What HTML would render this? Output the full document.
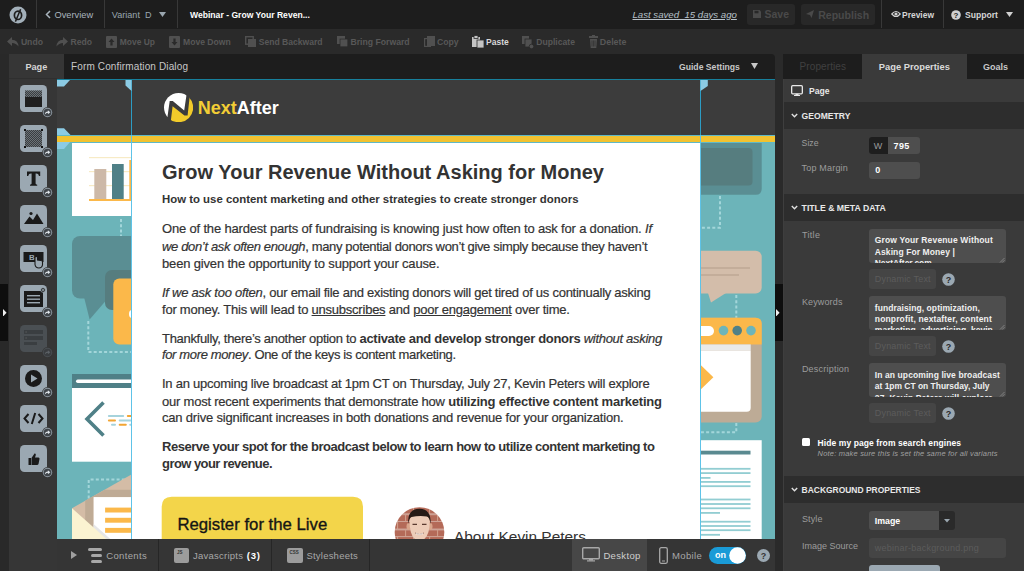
<!DOCTYPE html><html><head><meta charset="utf-8"><style>html,body{margin:0;padding:0;width:1024px;height:571px;overflow:hidden;background:#2a2a2a;font-family:"Liberation Sans", sans-serif;}*{box-sizing:border-box;}b{-webkit-text-stroke-width:0;}</style></head><body>
<div style="position:absolute;left:0px;top:0px;width:1024px;height:29px;background:#1d1d1d;border-radius:0px;"></div>
<div style="position:absolute;left:36px;top:0px;width:1px;height:28px;background:#383838;border-radius:0px;"></div>
<div style="position:absolute;left:104px;top:0px;width:1px;height:28px;background:#383838;border-radius:0px;"></div>
<div style="position:absolute;left:177px;top:0px;width:1px;height:28px;background:#383838;border-radius:0px;"></div>
<div style="position:absolute;left:881px;top:0px;width:1px;height:28px;background:#383838;border-radius:0px;"></div>
<div style="position:absolute;left:943px;top:0px;width:1px;height:28px;background:#383838;border-radius:0px;"></div>
<div style="position:absolute;left:0px;top:29px;width:1024px;height:25px;background:#2a2a2a;border-radius:0px;"></div>
<div style="position:absolute;left:0px;top:54px;width:9px;height:517px;background:#292929;border-radius:0px;"></div>
<div style="position:absolute;left:9px;top:54px;width:55px;height:25px;background:#363636;border-radius:0px;"></div>
<div style="position:absolute;left:9px;top:79px;width:48px;height:492px;background:#363636;border-radius:0px;"></div>
<div style="position:absolute;left:9px;top:78px;width:48px;height:1px;background:#2f2f2f;border-radius:0px;"></div>
<div style="position:absolute;left:64px;top:54px;width:711px;height:25px;background:#1d1d1d;border-radius:0 4px 0 0;"></div>
<div style="position:absolute;left:775px;top:54px;width:9px;height:517px;background:#2a2a2a;border-radius:0px;"></div>
<div style="position:absolute;left:783px;top:54px;width:79px;height:25px;background:#1d1d1d;border-radius:0px;"></div>
<div style="position:absolute;left:862px;top:54px;width:105px;height:25px;background:#3a3a3a;border-radius:0px;"></div>
<div style="position:absolute;left:967px;top:54px;width:57px;height:25px;background:#1d1d1d;border-radius:0px;"></div>
<div style="position:absolute;left:783px;top:79px;width:241px;height:492px;background:#3a3a3a;border-radius:0px;"></div>
<div style="position:absolute;left:784px;top:102px;width:240px;height:27px;background:#2d2d2d;border-radius:0px;"></div>
<div style="position:absolute;left:784px;top:194px;width:240px;height:27px;background:#2d2d2d;border-radius:0px;"></div>
<div style="position:absolute;left:784px;top:476px;width:240px;height:27px;background:#2d2d2d;border-radius:0px;"></div>
<div style="position:absolute;left:57px;top:80px;width:718px;height:459px;overflow:hidden;background:#6cb4b9;">
<div style="position:absolute;left:-57px;top:-80px;width:1024px;height:571px;">
<svg style="position:absolute;left:0;top:0" width="1024" height="571" viewBox="0 0 1024 571"><rect x="57" y="80" width="718" height="55" fill="#3c3c3c"/><rect x="72" y="143" width="70" height="73" fill="#ffffff"/><rect x="89" y="157" width="45" height="1.2" fill="#f7ebc6"/><rect x="89" y="171" width="45" height="1.2" fill="#f7ebc6"/><rect x="89" y="185" width="45" height="1.2" fill="#f7ebc6"/><rect x="89" y="199" width="45" height="2" fill="#fbb84a"/><rect x="129.3" y="160" width="3" height="40" fill="#fbb84a"/><rect x="94.3" y="169" width="12" height="30" fill="#cdb9a8"/><rect x="112" y="164" width="11.7" height="35" fill="#4f8087"/><path d="M121 219 V236" stroke="#a3d6da" stroke-width="2" stroke-dasharray="3 2.2"/><rect x="72" y="236" width="80" height="62.5" rx="8" fill="#5a8e93"/><path d="M84 297 L89.6 319.5 L109 297Z" fill="#5a8e93"/><rect x="105" y="270" width="40" height="40" rx="7" fill="#567d7f"/><rect x="113.3" y="278.5" width="40" height="66" rx="6" fill="#fbb84a"/><ellipse cx="132" cy="314" rx="3" ry="4" fill="#ffffff"/><path d="M88.3 321 V352 H134" fill="none" stroke="#a3d6da" stroke-width="2" stroke-dasharray="3 2.2"/><rect x="72" y="374" width="70" height="14" fill="#4f8087"/><rect x="76" y="379.5" width="60" height="3.5" rx="1.7" fill="#ffffff"/><rect x="72" y="388" width="70" height="73.7" fill="#ffffff"/><path d="M103.5 402.5 L87 419 L103.5 435.5" fill="none" stroke="#4f8087" stroke-width="3.6"/><rect x="107.9" y="415.1" width="16.299999999999997" height="2" rx="1" fill="#a6d3dc"/><rect x="126.8" y="415.1" width="9.200000000000003" height="2" rx="1" fill="#f2a533"/><rect x="107.9" y="419.5" width="8.099999999999994" height="2" rx="1" fill="#f2a533"/><rect x="118.7" y="419.5" width="17.299999999999997" height="2" rx="1" fill="#a6d3dc"/><rect x="111" y="423.7" width="5" height="2" rx="1" fill="#a6d3dc"/><rect x="118.7" y="423.7" width="8.099999999999994" height="2" rx="1" fill="#f2a533"/><rect x="129.2" y="423.7" width="6.800000000000011" height="2" rx="1" fill="#a6d3dc"/><path d="M88.7 498.5 V479.6 H134" fill="none" stroke="#a3d6da" stroke-width="2" stroke-dasharray="3 2.2"/><path d="M72 508.3 L134 473 V545 H72Z" fill="#d4bca6"/><path d="M85.2 500.8 L104.7 489.7 H134 V497.1 H93.6 V530 H85.2Z" fill="#bfab95"/><rect x="93.6" y="497.1" width="40" height="45" fill="#ffffff"/><rect x="105.1" y="507.6" width="30" height="4.9" fill="#fbb84a"/><rect x="105.1" y="517.8" width="30" height="4.9" fill="#fbb84a"/><rect x="105.1" y="527.9" width="30" height="4.9" fill="#fbb84a"/><path d="M93.6 524 L117 545 H110 L93.6 531Z" fill="#e6e6e6"/><path d="M72 508.3 L110 542 H72Z" fill="#fbf3d1"/><path d="M690 135 H761.7 V188.7 Q761.7 194.7 755.7 194.7 H690Z" fill="#5a8e93"/><rect x="690" y="148" width="62.5" height="37.5" rx="4" fill="#567d7f"/><path d="M720 196 V227.7 H700" fill="none" stroke="#a3d6da" stroke-width="2" stroke-dasharray="3 2.2"/><rect x="690" y="250.7" width="71.7" height="42.9" rx="6" fill="#d3bdaa"/><path d="M708 293 L711 302.5 L726 293Z" fill="#d3bdaa"/><rect x="700" y="267" width="50" height="2" fill="#c3ad9a"/><rect x="700" y="274" width="39" height="2" fill="#c3ad9a"/><path d="M736.3 295 V318" fill="none" stroke="#a3d6da" stroke-width="2" stroke-dasharray="3 2.2"/><path d="M736.3 423 V432.2 H700" fill="none" stroke="#a3d6da" stroke-width="2" stroke-dasharray="3 2.2"/><rect x="690" y="317.8" width="71.7" height="104.6" rx="6" fill="#bdab96"/><path d="M690 317.8 H755.7 Q761.7 317.8 761.7 323.8 V344.4 H690Z" fill="#fbb84a"/><rect x="690" y="326" width="24" height="10" rx="5" fill="#ffffff"/><circle cx="723.5" cy="330.6" r="4.8" fill="#6db5ba"/><circle cx="737.2" cy="330.6" r="4.8" fill="#4f8087"/><circle cx="751" cy="330.6" r="4.8" fill="#6db5ba"/><rect x="690" y="344.4" width="60.7" height="6.1" fill="#e9eaea"/><path d="M690 350.5 H750.7 V407.7 Q750.7 411.7 746.7 411.7 H690Z" fill="#ffffff"/><path d="M696 360.5 L713.4 377.2 L696 393.9Z" fill="#fbb84a"/><rect x="690" y="440.2" width="71.7" height="110" fill="#ffffff"/><rect x="700" y="450.7" width="50.5" height="3.8" fill="#5a8a90"/><rect x="700" y="467.90000000000003" width="50.5" height="1.8" fill="#92cdd2"/><rect x="700" y="472.20000000000005" width="50.5" height="1.8" fill="#92cdd2"/><rect x="700" y="477.0" width="10.5" height="1.8" fill="#92cdd2"/><rect x="700" y="481.0" width="50.5" height="1.8" fill="#92cdd2"/><rect x="700" y="485.3" width="50.5" height="1.8" fill="#92cdd2"/><rect x="700" y="498.6" width="50.5" height="1.8" fill="#92cdd2"/><rect x="700" y="503.1" width="50.5" height="1.8" fill="#92cdd2"/><rect x="700" y="507.40000000000003" width="50.5" height="1.8" fill="#92cdd2"/><rect x="700" y="512.0" width="20" height="1.8" fill="#92cdd2"/><rect x="700" y="520.8000000000001" width="50.5" height="1.8" fill="#92cdd2"/><rect x="700" y="525.1" width="50.5" height="1.8" fill="#92cdd2"/><rect x="700" y="529.3000000000001" width="50.5" height="1.8" fill="#92cdd2"/><rect x="700" y="533.9" width="20" height="1.8" fill="#92cdd2"/><rect x="131" y="142" width="569" height="420" fill="#ffffff"/><rect x="57" y="135" width="718" height="8" fill="#5fb9c7"/><rect x="57" y="136" width="718" height="6" fill="#f2c230"/><rect x="131" y="80" width="1" height="470" fill="#5ec3e8"/><rect x="700" y="80" width="1" height="470" fill="#5ec3e8"/><rect x="131" y="80" width="1" height="55" fill="#2c9cc4"/><rect x="700" y="80" width="1" height="55" fill="#2c9cc4"/><path d="M125.5 80 H131.5 V91 L125.5 85.5Z" fill="#8ccbe4"/><path d="M700.5 80 H707.8 V86 L700.5 91Z" fill="#8ccbe4"/><path d="M57 80 H70 L64 86.5 H57Z" fill="#8ccbe4"/><path d="M57 128.2 H64 L70.5 135 H57Z" fill="#8ccbe4"/><path d="M57 142 H70 L64 149 H57Z" fill="#8ccbe4"/><path d="M161.7 560 V506.7 Q161.7 496.7 171.7 496.7 H353 Q363 496.7 363 506.7 V560Z" fill="#f3d54a"/><defs><clipPath id="av"><circle cx="419.5" cy="532" r="24.8"/></clipPath><pattern id="brick" width="16" height="15.2" patternUnits="userSpaceOnUse" x="394" y="506.7"><rect width="16" height="15.2" fill="#b46a58"/><rect y="7" width="16" height="1.1" fill="#e2cdc3"/><rect y="14.6" width="16" height="1.1" fill="#e2cdc3"/><rect x="3" y="0" width="1.1" height="7" fill="#cf9c88"/><rect x="11" y="7.6" width="1.1" height="7" fill="#cf9c88"/></pattern></defs><g clip-path="url(#av)"><rect x="394" y="506" width="52" height="52" fill="url(#brick)"/><ellipse cx="408.5" cy="526.5" rx="2" ry="3.5" fill="#d9a58b"/><ellipse cx="430.5" cy="526.5" rx="2" ry="3.5" fill="#d9a58b"/><path d="M409.5 520 Q409.5 540 419.5 541 Q429.8 540 429.8 520 Q429 515 419.5 515 Q410 515 409.5 520Z" fill="#edccb8"/><path d="M408.3 524 Q407 509 419.5 508.7 Q431.5 509 430.6 524 Q429.5 517 427 516.5 Q419 515.5 411.5 517 Q409 518 408.3 524Z" fill="#261a16"/><path d="M412.5 524.3 H417 M422 524.3 H426.5" stroke="#5a3a30" stroke-width="1.2"/><path d="M415 533 Q419.5 536 424 533" fill="none" stroke="#8a5a4a" stroke-width="0.9"/><path d="M415.8 533.6 Q419.5 535.2 423.2 533.6" fill="none" stroke="#fff" stroke-width="0.9"/></g></svg>
<svg style="position:absolute;left:164px;top:92.5px;" width="29.2" height="29.2" viewBox="0 0 29.2 29.2"><defs><clipPath id="lg"><circle cx="14.6" cy="14.6" r="14.6"/></clipPath></defs><g clip-path="url(#lg)"><path d="M0 0 H22.6 L22.4 2.8 L20.2 17.4 L8.8 8 H5.7 L3.5 23.8 L0 29Z" fill="#ffffff"/><path d="M6.6 29.5 L8.6 13.3 L20.4 22.6 H23.6 L25.6 4.5 L29.5 0 V29.5Z" fill="#f2cb2a"/></g></svg>
<div id="c_next" style="position:absolute;left:197.7px;top:95.50px;height:24px;line-height:24px;font-size:17.993px;font-weight:700;color:#ffffff;white-space:nowrap;"><span style="color:#f2cd35">Next</span>After</div>
<div id="c_title" style="position:absolute;left:162px;top:159.50px;height:24px;line-height:24px;font-size:20px;font-weight:700;color:#333333;white-space:nowrap;letter-spacing:0.007px;">Grow Your Revenue Without Asking for Money</div>
<div id="c_sub" style="position:absolute;left:162px;top:188.60px;height:20px;line-height:20px;font-size:11.405px;font-weight:700;color:#333333;white-space:nowrap;">How to use content marketing and other strategies to create stronger donors</div>
<div id="c_l0" style="position:absolute;left:162px;top:220.40px;height:17px;line-height:17px;font-size:13px;font-weight:400;color:#333333;white-space:nowrap;letter-spacing:-0.176px;-webkit-text-stroke:0.2px #333;">One of the hardest parts of fundraising is knowing just how often to ask for a donation. <i>If</i></div>
<div id="c_l1" style="position:absolute;left:162px;top:237.70px;height:17px;line-height:17px;font-size:13px;font-weight:400;color:#333333;white-space:nowrap;letter-spacing:-0.345px;-webkit-text-stroke:0.2px #333;"><i>we don’t ask often enough</i>, many potential donors won’t give simply because they haven’t</div>
<div id="c_l2" style="position:absolute;left:162px;top:255.00px;height:17px;line-height:17px;font-size:13px;font-weight:400;color:#333333;white-space:nowrap;letter-spacing:-0.166px;-webkit-text-stroke:0.2px #333;">been given the opportunity to support your cause.</div>
<div id="c_l3" style="position:absolute;left:162px;top:284.20px;height:17px;line-height:17px;font-size:13px;font-weight:400;color:#333333;white-space:nowrap;letter-spacing:-0.260px;-webkit-text-stroke:0.2px #333;"><i>If we ask too often</i>, our email file and existing donors will get tired of us continually asking</div>
<div id="c_l4" style="position:absolute;left:162px;top:301.20px;height:17px;line-height:17px;font-size:13px;font-weight:400;color:#333333;white-space:nowrap;letter-spacing:-0.232px;-webkit-text-stroke:0.2px #333;">for money. This will lead to <u>unsubscribes</u> and <u>poor engagement</u> over time.</div>
<div id="c_l5" style="position:absolute;left:162px;top:329.70px;height:17px;line-height:17px;font-size:13px;font-weight:400;color:#333333;white-space:nowrap;letter-spacing:-0.305px;-webkit-text-stroke:0.2px #333;">Thankfully, there’s another option to <b>activate and develop stronger donors</b> <i>without asking</i></div>
<div id="c_l6" style="position:absolute;left:162px;top:346.40px;height:17px;line-height:17px;font-size:13px;font-weight:400;color:#333333;white-space:nowrap;letter-spacing:-0.363px;-webkit-text-stroke:0.2px #333;"><i>for more money</i>. One of the keys is content marketing.</div>
<div id="c_l7" style="position:absolute;left:162px;top:375.40px;height:17px;line-height:17px;font-size:13px;font-weight:400;color:#333333;white-space:nowrap;letter-spacing:-0.245px;-webkit-text-stroke:0.2px #333;">In an upcoming live broadcast at 1pm CT on Thursday, July 27, Kevin Peters will explore</div>
<div id="c_l8" style="position:absolute;left:162px;top:392.50px;height:17px;line-height:17px;font-size:13px;font-weight:400;color:#333333;white-space:nowrap;letter-spacing:-0.221px;-webkit-text-stroke:0.2px #333;">our most recent experiments that demonstrate how <b>utilizing effective content marketing</b></div>
<div id="c_l9" style="position:absolute;left:162px;top:409.20px;height:17px;line-height:17px;font-size:13px;font-weight:400;color:#333333;white-space:nowrap;letter-spacing:-0.194px;-webkit-text-stroke:0.2px #333;">can drive significant increases in both donations and revenue for your organization.</div>
<div id="c_l10" style="position:absolute;left:162px;top:438.20px;height:17px;line-height:17px;font-size:13px;font-weight:400;color:#333333;white-space:nowrap;letter-spacing:-0.465px;-webkit-text-stroke:0.2px #333;"><b>Reserve your spot for the broadcast below to learn how to utilize content marketing to</b></div>
<div id="c_l11" style="position:absolute;left:162px;top:455.20px;height:17px;line-height:17px;font-size:13px;font-weight:400;color:#333333;white-space:nowrap;letter-spacing:-0.554px;-webkit-text-stroke:0.2px #333;"><b>grow your revenue.</b></div>
<div id="c_reg" style="position:absolute;left:177.4px;top:514.00px;height:22px;line-height:22px;font-size:16.761px;font-weight:400;color:#151515;white-space:nowrap;-webkit-text-stroke:0.35px #151515;">Register for the Live</div>
<div id="c_about" style="position:absolute;left:454px;top:526.00px;height:22px;line-height:22px;font-size:15.419px;font-weight:400;color:#333333;white-space:nowrap;">About Kevin Peters</div>
</div></div>
<div style="position:absolute;left:57px;top:79px;width:718px;height:1px;background:#17809c;border-radius:0px;"></div>
<div style="position:absolute;left:57px;top:539px;width:718px;height:32px;background:#353535;border-radius:0px;"></div>
<div style="position:absolute;left:158px;top:539px;width:1px;height:32px;background:#262626;border-radius:0px;"></div>
<div style="position:absolute;left:271px;top:539px;width:1px;height:32px;background:#262626;border-radius:0px;"></div>
<div style="position:absolute;left:369px;top:539px;width:1px;height:32px;background:#262626;border-radius:0px;"></div>
<div style="position:absolute;left:572px;top:539px;width:75px;height:32px;background:#474747;border-radius:0px;"></div>
<div style="position:absolute;left:0px;top:284px;width:8px;height:57px;background:#0e0e0e;border-radius:0px;"></div>
<svg style="position:absolute;left:2.5px;top:308.5px;" width="4" height="7.5" viewBox="0 0 4 7.5"><path d="M0 0 L3.6 3.75 L0 7.5Z" fill="#f0f0f0"/></svg>
<div style="position:absolute;left:775px;top:284px;width:8px;height:57px;background:#0e0e0e;border-radius:0px;"></div>
<svg style="position:absolute;left:776px;top:308.5px;" width="4" height="7.5" viewBox="0 0 4 7.5"><path d="M0 0 L3.6 3.75 L0 7.5Z" fill="#f0f0f0"/></svg>
<div style="position:absolute;left:783px;top:79px;width:1px;height:492px;background:#3e3e3e;border-radius:0px;"></div>
<svg style="position:absolute;left:9px;top:6px;" width="18" height="18" viewBox="0 0 18 18"><circle cx="9" cy="9" r="8.5" fill="#a3b0ba"/><ellipse cx="9" cy="9.3" rx="3.6" ry="4.2" fill="none" stroke="#1d1d1d" stroke-width="1.7"/><path d="M11.6 3.2 L6.4 15.6" stroke="#1d1d1d" stroke-width="1.5"/></svg>
<svg style="position:absolute;left:45px;top:10px;" width="6" height="9" viewBox="0 0 6 9"><path d="M5 1 L1.5 4.5 L5 8" fill="none" stroke="#a9b5be" stroke-width="1.5"/></svg>
<svg style="position:absolute;left:159px;top:12px;" width="7" height="5" viewBox="0 0 7 5"><path d="M0 0 L7 0 L3.5 5Z" fill="#9aa6af"/></svg>
<div style="position:absolute;left:747px;top:4px;width:48px;height:21px;background:#282828;border-radius:3px;"></div>
<div style="position:absolute;left:801px;top:4px;width:74px;height:21px;background:#282828;border-radius:3px;"></div>
<svg style="position:absolute;left:753px;top:10px;" width="8" height="8" viewBox="0 0 8 8"><path d="M0 0 H6.5 L8 1.5 V8 H0Z" fill="#4a4a4a"/><rect x="1.5" y="0.8" width="4" height="2.5" fill="#282828"/></svg>
<svg style="position:absolute;left:806px;top:10px;" width="8" height="8" viewBox="0 0 8 8"><path d="M0 4 L8 0 L5.5 8 L4 5Z" fill="#4a4a4a"/></svg>
<svg style="position:absolute;left:891px;top:10px;" width="10" height="8" viewBox="0 0 10 8"><path d="M0.8 4 Q5 -1 9.2 4 Q5 9 0.8 4Z" fill="none" stroke="#d0d0d0" stroke-width="1.2"/><circle cx="5" cy="4" r="1.6" fill="#d0d0d0"/></svg>
<svg style="position:absolute;left:951px;top:10px;" width="10" height="10" viewBox="0 0 10 10"><circle cx="5" cy="5" r="4.8" fill="#d0d0d0"/><text x="5" y="8.2" font-size="8" font-weight="700" text-anchor="middle" fill="#1d1d1d" font-family="Liberation Sans">?</text></svg>
<svg style="position:absolute;left:1006px;top:12px;" width="7" height="5" viewBox="0 0 7 5"><path d="M0 0 L7 0 L3.5 5Z" fill="#d0d0d0"/></svg>
<svg style="position:absolute;left:7px;top:37px;" width="12" height="10" viewBox="0 0 12 10"><path d="M0 4.5 L5 0 V2.8 Q11 2.8 11.5 9.5 Q9 6 5 6 V9Z" fill="#505050"/></svg>
<svg style="position:absolute;left:56px;top:37px;" width="12" height="10" viewBox="0 0 12 10"><path d="M12 4.5 L7 0 V2.8 Q1 2.8 0.5 9.5 Q3 6 7 6 V9Z" fill="#505050"/></svg>
<svg style="position:absolute;left:106px;top:36px;" width="11" height="12" viewBox="0 0 11 12"><rect width="11" height="12" rx="1" fill="#505050"/><path d="M5.5 2.5 L8.5 6 H6.6 V9.5 H4.4 V6 H2.5Z" fill="#2a2a2a"/></svg>
<svg style="position:absolute;left:169px;top:36px;" width="11" height="12" viewBox="0 0 11 12"><rect width="11" height="12" rx="1" fill="#505050"/><path d="M5.5 9.5 L8.5 6 H6.6 V2.5 H4.4 V6 H2.5Z" fill="#2a2a2a"/></svg>
<svg style="position:absolute;left:245px;top:36px;" width="11" height="12" viewBox="0 0 11 12"><rect x="0.7" y="0.7" width="7.5" height="7.5" fill="none" stroke="#505050" stroke-width="1.4"/><rect x="3" y="3" width="8" height="8" fill="#505050"/></svg>
<svg style="position:absolute;left:337px;top:36px;" width="11" height="12" viewBox="0 0 11 12"><rect x="0" y="0" width="8" height="8" fill="#505050"/><rect x="2.7" y="2.7" width="8" height="8" fill="#2a2a2a"/><rect x="3.4" y="3.4" width="7" height="7" fill="#505050"/></svg>
<svg style="position:absolute;left:424px;top:36px;" width="11" height="12" viewBox="0 0 11 12"><rect x="0" y="2" width="7" height="9" fill="#505050"/><rect x="1.2" y="3.2" width="4.6" height="6.6" fill="#2a2a2a"/><rect x="3" y="0" width="8" height="10" fill="#505050"/></svg>
<svg style="position:absolute;left:472px;top:35px;" width="12" height="13" viewBox="0 0 12 13"><rect x="0" y="2" width="8" height="10" fill="#c4c4c4"/><rect x="2" y="0.5" width="4" height="3" fill="#c4c4c4" stroke="#2a2a2a" stroke-width="0.8"/><rect x="5" y="5" width="7" height="8" fill="#c4c4c4" stroke="#2a2a2a" stroke-width="0.8"/></svg>
<svg style="position:absolute;left:522px;top:36px;" width="12" height="13" viewBox="0 0 12 13"><rect x="0" y="0" width="7" height="8" fill="#505050"/><rect x="3" y="3" width="7" height="8" fill="#505050" stroke="#2a2a2a" stroke-width="0.8"/><circle cx="9.5" cy="10.5" r="2.3" fill="#505050" stroke="#2a2a2a" stroke-width="0.8"/></svg>
<svg style="position:absolute;left:589px;top:35px;" width="9" height="13" viewBox="0 0 9 13"><rect x="0" y="1" width="9" height="2" fill="#505050"/><rect x="3" y="0" width="3" height="1.5" fill="#505050"/><path d="M1 4 H8 L7.3 13 H1.7Z" fill="#505050"/><path d="M3 5.5 V11.5 M4.5 5.5 V11.5 M6 5.5 V11.5" stroke="#2a2a2a" stroke-width="0.6"/></svg>
<svg style="position:absolute;left:751px;top:63px;" width="7" height="6" viewBox="0 0 7 6"><path d="M0 0 L7 0 L3.5 6Z" fill="#c8c8c8"/></svg>
<svg style="position:absolute;left:20px;top:85px;" width="27" height="27" viewBox="0 0 27 27"><rect width="27" height="27" rx="4.5" fill="#9ba8b2"/><defs><pattern id="chk" width="2" height="2" patternUnits="userSpaceOnUse"><rect width="1" height="1" fill="#3a3d40"/><rect x="1" y="1" width="1" height="1" fill="#3a3d40"/></pattern></defs><rect x="5" y="5.5" width="17" height="6.5" fill="#6b7378"/><rect x="5" y="5.5" width="17" height="6.5" fill="url(#chk)"/><rect x="5" y="12" width="17" height="10" fill="#1f1f1f"/></svg><svg style="position:absolute;left:42px;top:107px;" width="11" height="11" viewBox="0 0 11 11"><circle cx="5.5" cy="5.5" r="5.4" fill="#363636"/><circle cx="5.5" cy="5.5" r="4.7" fill="#8f9aa3"/><circle cx="5.5" cy="5.5" r="3.8" fill="#40454a"/><path d="M2.8 7.6 Q3 4.6 5.9 4.6 V3.2 L8.3 5.2 L5.9 7.2 V5.8 Q4 5.8 2.8 7.6Z" fill="#dfe5ea"/></svg>
<svg style="position:absolute;left:20px;top:125px;" width="27" height="27" viewBox="0 0 27 27"><rect width="27" height="27" rx="4.5" fill="#9ba8b2"/><rect x="5" y="5" width="17" height="17" fill="#6b7378"/><rect x="5" y="5" width="17" height="17" fill="url(#chk)"/><rect x="4" y="4" width="2" height="2" fill="#111"/><rect x="21" y="4" width="2" height="2" fill="#111"/><rect x="4" y="21" width="2" height="2" fill="#111"/><rect x="21" y="21" width="2" height="2" fill="#111"/></svg><svg style="position:absolute;left:42px;top:147px;" width="11" height="11" viewBox="0 0 11 11"><circle cx="5.5" cy="5.5" r="5.4" fill="#363636"/><circle cx="5.5" cy="5.5" r="4.7" fill="#8f9aa3"/><circle cx="5.5" cy="5.5" r="3.8" fill="#40454a"/><path d="M2.8 7.6 Q3 4.6 5.9 4.6 V3.2 L8.3 5.2 L5.9 7.2 V5.8 Q4 5.8 2.8 7.6Z" fill="#dfe5ea"/></svg>
<svg style="position:absolute;left:20px;top:165px;" width="27" height="27" viewBox="0 0 27 27"><rect width="27" height="27" rx="4.5" fill="#9ba8b2"/><path d="M7 6.5 H20.2 V11 H19 Q18.6 8.6 16.2 8.6 H15.6 V18.6 Q15.6 19.6 17.2 19.8 V20.8 H10 V19.8 Q11.6 19.6 11.6 18.6 V8.6 H11 Q8.6 8.6 8.2 11 H7Z" fill="#1a1a1a"/></svg><svg style="position:absolute;left:42px;top:187px;" width="11" height="11" viewBox="0 0 11 11"><circle cx="5.5" cy="5.5" r="5.4" fill="#363636"/><circle cx="5.5" cy="5.5" r="4.7" fill="#8f9aa3"/><circle cx="5.5" cy="5.5" r="3.8" fill="#40454a"/><path d="M2.8 7.6 Q3 4.6 5.9 4.6 V3.2 L8.3 5.2 L5.9 7.2 V5.8 Q4 5.8 2.8 7.6Z" fill="#dfe5ea"/></svg>
<svg style="position:absolute;left:20px;top:205px;" width="27" height="27" viewBox="0 0 27 27"><rect width="27" height="27" rx="4.5" fill="#9ba8b2"/><circle cx="11" cy="8.5" r="1.6" fill="#1a1a1a"/><path d="M4 19 L9.5 11.5 L13 15 L17 8.5 L23.5 19Z" fill="#1a1a1a"/></svg><svg style="position:absolute;left:42px;top:227px;" width="11" height="11" viewBox="0 0 11 11"><circle cx="5.5" cy="5.5" r="5.4" fill="#363636"/><circle cx="5.5" cy="5.5" r="4.7" fill="#8f9aa3"/><circle cx="5.5" cy="5.5" r="3.8" fill="#40454a"/><path d="M2.8 7.6 Q3 4.6 5.9 4.6 V3.2 L8.3 5.2 L5.9 7.2 V5.8 Q4 5.8 2.8 7.6Z" fill="#dfe5ea"/></svg>
<svg style="position:absolute;left:20px;top:245px;" width="27" height="27" viewBox="0 0 27 27"><rect width="27" height="27" rx="4.5" fill="#9ba8b2"/><rect x="3.5" y="7" width="20" height="10" fill="#1a1a1a"/><text x="12" y="15" font-size="8" font-weight="700" text-anchor="middle" fill="#9ba8b2" font-family="Liberation Sans">B</text><path d="M15 12 V19.5 Q15.5 23 19 23 Q22 23 22.5 20 V16.5 Q22 15.5 21 15.5 L17.5 15 V12 Q16.3 10.8 15 12Z" fill="#9ba8b2" stroke="#1a1a1a" stroke-width="1.1"/></svg><svg style="position:absolute;left:42px;top:267px;" width="11" height="11" viewBox="0 0 11 11"><circle cx="5.5" cy="5.5" r="5.4" fill="#363636"/><circle cx="5.5" cy="5.5" r="4.7" fill="#8f9aa3"/><circle cx="5.5" cy="5.5" r="3.8" fill="#40454a"/><path d="M2.8 7.6 Q3 4.6 5.9 4.6 V3.2 L8.3 5.2 L5.9 7.2 V5.8 Q4 5.8 2.8 7.6Z" fill="#dfe5ea"/></svg>
<svg style="position:absolute;left:20px;top:285px;" width="27" height="27" viewBox="0 0 27 27"><rect width="27" height="27" rx="4.5" fill="#9ba8b2"/><rect x="4" y="6" width="19" height="16" fill="#1a1a1a"/><rect x="7" y="10" width="13" height="1.4" fill="#9ba8b2"/><rect x="7" y="13.5" width="13" height="1.4" fill="#9ba8b2"/><rect x="7" y="17" width="13" height="1.4" fill="#9ba8b2"/><circle cx="23" cy="5" r="2.3" fill="#1a1a1a" stroke="#9ba8b2" stroke-width="0.8"/><circle cx="23" cy="5" r="1" fill="#9ba8b2"/></svg><svg style="position:absolute;left:42px;top:307px;" width="11" height="11" viewBox="0 0 11 11"><circle cx="5.5" cy="5.5" r="5.4" fill="#363636"/><circle cx="5.5" cy="5.5" r="4.7" fill="#8f9aa3"/><circle cx="5.5" cy="5.5" r="3.8" fill="#40454a"/><path d="M2.8 7.6 Q3 4.6 5.9 4.6 V3.2 L8.3 5.2 L5.9 7.2 V5.8 Q4 5.8 2.8 7.6Z" fill="#dfe5ea"/></svg>
<svg style="position:absolute;left:20px;top:325px;" width="27" height="27" viewBox="0 0 27 27"><rect width="27" height="27" rx="4.5" fill="#4a4f53"/><rect x="4" y="5" width="19" height="4" fill="#3a3e41"/><rect x="4" y="11" width="19" height="4" fill="#3a3e41"/><rect x="4" y="17" width="13" height="3" fill="#3a3e41"/><rect x="5.5" y="6.5" width="1.2" height="1" fill="#666"/><rect x="5.5" y="12.5" width="1.2" height="1" fill="#666"/></svg><svg style="position:absolute;left:42px;top:347px;" width="11" height="11" viewBox="0 0 11 11"><circle cx="5.5" cy="5.5" r="5.4" fill="#363636"/><circle cx="5.5" cy="5.5" r="4.7" fill="#4a4f53"/><circle cx="5.5" cy="5.5" r="3.8" fill="#3a3d40"/><path d="M2.8 7.6 Q3 4.6 5.9 4.6 V3.2 L8.3 5.2 L5.9 7.2 V5.8 Q4 5.8 2.8 7.6Z" fill="#5c6166"/></svg>
<svg style="position:absolute;left:20px;top:365px;" width="27" height="27" viewBox="0 0 27 27"><rect width="27" height="27" rx="4.5" fill="#9ba8b2"/><circle cx="13.5" cy="13.5" r="8.5" fill="#1a1a1a"/><path d="M11 9.5 L17.5 13.5 L11 17.5Z" fill="#9ba8b2"/></svg><svg style="position:absolute;left:42px;top:387px;" width="11" height="11" viewBox="0 0 11 11"><circle cx="5.5" cy="5.5" r="5.4" fill="#363636"/><circle cx="5.5" cy="5.5" r="4.7" fill="#8f9aa3"/><circle cx="5.5" cy="5.5" r="3.8" fill="#40454a"/><path d="M2.8 7.6 Q3 4.6 5.9 4.6 V3.2 L8.3 5.2 L5.9 7.2 V5.8 Q4 5.8 2.8 7.6Z" fill="#dfe5ea"/></svg>
<svg style="position:absolute;left:20px;top:405px;" width="27" height="27" viewBox="0 0 27 27"><rect width="27" height="27" rx="4.5" fill="#9ba8b2"/><path d="M8.5 9 L4.5 13.5 L8.5 18 M18.5 9 L22.5 13.5 L18.5 18 M15.2 8 L11.8 19" fill="none" stroke="#1a1a1a" stroke-width="2"/></svg><svg style="position:absolute;left:42px;top:427px;" width="11" height="11" viewBox="0 0 11 11"><circle cx="5.5" cy="5.5" r="5.4" fill="#363636"/><circle cx="5.5" cy="5.5" r="4.7" fill="#8f9aa3"/><circle cx="5.5" cy="5.5" r="3.8" fill="#40454a"/><path d="M2.8 7.6 Q3 4.6 5.9 4.6 V3.2 L8.3 5.2 L5.9 7.2 V5.8 Q4 5.8 2.8 7.6Z" fill="#dfe5ea"/></svg>
<svg style="position:absolute;left:20px;top:445px;" width="27" height="27" viewBox="0 0 27 27"><rect width="27" height="27" rx="4.5" fill="#9ba8b2"/><path d="M8.5 13 H11 V20 H8.5Z" fill="#1a1a1a"/><path d="M11.5 13 L14.5 8.5 Q16 8 15.8 10 L15 12.5 H18.5 Q19.8 12.8 19.5 14 L18.5 19 Q18.2 20 17 20 H11.5Z" fill="#1a1a1a"/></svg><svg style="position:absolute;left:42px;top:467px;" width="11" height="11" viewBox="0 0 11 11"><circle cx="5.5" cy="5.5" r="5.4" fill="#363636"/><circle cx="5.5" cy="5.5" r="4.7" fill="#8f9aa3"/><circle cx="5.5" cy="5.5" r="3.8" fill="#40454a"/><path d="M2.8 7.6 Q3 4.6 5.9 4.6 V3.2 L8.3 5.2 L5.9 7.2 V5.8 Q4 5.8 2.8 7.6Z" fill="#dfe5ea"/></svg>
<svg style="position:absolute;left:791px;top:84.5px;" width="12" height="11.2" viewBox="0 0 12 11.2"><rect x="0.65" y="0.65" width="10.7" height="8.2" rx="1" fill="none" stroke="#e8e8e8" stroke-width="1.3"/><rect x="4.5" y="8.8" width="3" height="1.4" fill="#e8e8e8"/><rect x="3" y="10" width="6" height="1.2" fill="#e8e8e8"/></svg>
<svg style="position:absolute;left:791px;top:113px;" width="7" height="5" viewBox="0 0 7 5"><path d="M0.8 1 L3.5 3.8 L6.2 1" fill="none" stroke="#e0e0e0" stroke-width="1.4"/></svg>
<svg style="position:absolute;left:791px;top:205px;" width="7" height="5" viewBox="0 0 7 5"><path d="M0.8 1 L3.5 3.8 L6.2 1" fill="none" stroke="#e0e0e0" stroke-width="1.4"/></svg>
<svg style="position:absolute;left:791px;top:487px;" width="7" height="5" viewBox="0 0 7 5"><path d="M0.8 1 L3.5 3.8 L6.2 1" fill="none" stroke="#e0e0e0" stroke-width="1.4"/></svg>
<div style="position:absolute;left:869px;top:137px;width:19px;height:17px;background:#1e1e1e;border-radius:3px 0 0 3px;"></div>
<div style="position:absolute;left:888px;top:137px;width:32px;height:17px;background:#4e4e4e;border-radius:0 3px 3px 0;"></div>
<div style="position:absolute;left:869px;top:162px;width:51px;height:17px;background:#4e4e4e;border-radius:3px;"></div>
<div style="position:absolute;left:869px;top:229px;width:137px;height:34px;background:#4e4e4e;border-radius:3px;overflow:hidden"></div>
<div style="position:absolute;left:869px;top:296px;width:137px;height:34px;background:#4e4e4e;border-radius:3px;overflow:hidden"></div>
<div style="position:absolute;left:869px;top:363px;width:137px;height:34px;background:#4e4e4e;border-radius:3px;overflow:hidden"></div>
<div style="position:absolute;left:869px;top:269px;width:67px;height:20px;background:#454545;border-radius:3px;"></div>
<svg style="position:absolute;left:942px;top:273px;" width="13" height="13" viewBox="0 0 13 13"><circle cx="6.5" cy="6.5" r="6.3" fill="#9ba8b2"/><text x="6.5" y="10" font-size="9" font-weight="700" text-anchor="middle" fill="#2a2a2a" font-family="Liberation Sans">?</text></svg>
<div style="position:absolute;left:869px;top:336px;width:67px;height:20px;background:#454545;border-radius:3px;"></div>
<svg style="position:absolute;left:942px;top:340px;" width="13" height="13" viewBox="0 0 13 13"><circle cx="6.5" cy="6.5" r="6.3" fill="#9ba8b2"/><text x="6.5" y="10" font-size="9" font-weight="700" text-anchor="middle" fill="#2a2a2a" font-family="Liberation Sans">?</text></svg>
<div style="position:absolute;left:869px;top:403px;width:67px;height:20px;background:#454545;border-radius:3px;"></div>
<svg style="position:absolute;left:942px;top:407px;" width="13" height="13" viewBox="0 0 13 13"><circle cx="6.5" cy="6.5" r="6.3" fill="#9ba8b2"/><text x="6.5" y="10" font-size="9" font-weight="700" text-anchor="middle" fill="#2a2a2a" font-family="Liberation Sans">?</text></svg>
<div style="position:absolute;left:802px;top:438px;width:8px;height:8px;background:#ffffff;border-radius:1.5px;"></div>
<div style="position:absolute;left:869px;top:511px;width:70px;height:19px;background:#4e4e4e;border-radius:3px 0 0 3px;"></div>
<div style="position:absolute;left:939px;top:511px;width:16px;height:19px;background:#2a2a2a;border-radius:0 3px 3px 0;"></div>
<svg style="position:absolute;left:944px;top:519px;" width="6" height="4" viewBox="0 0 6 4"><path d="M0 0 L6 0 L3 3.5Z" fill="#9aa6af"/></svg>
<div style="position:absolute;left:869px;top:538px;width:137px;height:20px;background:#454545;border-radius:3px;"></div>
<div style="position:absolute;left:869px;top:565px;width:71px;height:8px;background:#9ba8b2;border-radius:3px 3px 0 0;"></div>
<svg style="position:absolute;left:71px;top:551px;" width="6" height="8" viewBox="0 0 6 8"><path d="M0 0 L6 4 L0 8Z" fill="#a0a0a0"/></svg>
<svg style="position:absolute;left:87px;top:548px;" width="16" height="15" viewBox="0 0 16 15"><rect x="1" y="0" width="14" height="3" rx="1.5" fill="#a8a8a8"/><rect x="4" y="6" width="11" height="3" rx="1.5" fill="#a8a8a8"/><rect x="4" y="12" width="11" height="3" rx="1.5" fill="#a8a8a8"/></svg>
<svg style="position:absolute;left:174px;top:548px;" width="15" height="15" viewBox="0 0 15 15"><rect width="15" height="15" rx="2" fill="#9c9c9c"/><text x="3" y="6" font-size="4.5" font-weight="700" fill="#333" font-family="Liberation Sans">JS</text></svg>
<svg style="position:absolute;left:287px;top:548px;" width="16" height="15" viewBox="0 0 16 15"><rect width="16" height="15" rx="2" fill="#9c9c9c"/><text x="2.5" y="6" font-size="4.5" font-weight="700" fill="#333" font-family="Liberation Sans">CSS</text></svg>
<svg style="position:absolute;left:582px;top:547px;" width="18" height="15" viewBox="0 0 18 15"><rect x="0.7" y="0.7" width="16.6" height="11" rx="1" fill="none" stroke="#a8a8a8" stroke-width="1.4"/><rect x="7" y="11.5" width="4" height="2" fill="#a8a8a8"/><rect x="5" y="13.3" width="8" height="1.2" fill="#a8a8a8"/></svg>
<svg style="position:absolute;left:659px;top:547px;" width="9" height="17" viewBox="0 0 9 17"><rect x="0.7" y="0.7" width="7.6" height="15.6" rx="1.5" fill="none" stroke="#a8a8a8" stroke-width="1.3"/><rect x="3" y="13.5" width="3" height="1" fill="#a8a8a8"/></svg>
<div style="position:absolute;left:709px;top:547px;width:37px;height:17px;background:#1a9bd7;border-radius:8.5px;"></div>
<svg style="position:absolute;left:729px;top:547px;" width="17" height="17" viewBox="0 0 17 17"><circle cx="8.5" cy="8.5" r="8.3" fill="#ffffff"/></svg>
<svg style="position:absolute;left:757px;top:549px;" width="13" height="13" viewBox="0 0 13 13"><circle cx="6.5" cy="6.5" r="6.5" fill="#9ba8b2"/><text x="6.5" y="10" font-size="9" font-weight="700" text-anchor="middle" fill="#353535" font-family="Liberation Sans">?</text></svg>
<div id="t_overview" style="position:absolute;left:54.5px;top:4.50px;height:20px;line-height:20px;font-size:9.283px;font-weight:400;color:#a9b5be;white-space:nowrap;">Overview</div>
<div id="t_variant" style="position:absolute;left:111.8px;top:4.50px;height:20px;line-height:20px;font-size:9.1px;font-weight:400;color:#9aa6af;white-space:nowrap;">Variant&nbsp; D</div>
<div id="t_webinar" style="position:absolute;left:190px;top:4.50px;height:20px;line-height:20px;font-size:8.603px;font-weight:700;color:#ffffff;white-space:nowrap;">Webinar - Grow Your Reven...</div>
<div id="t_lastsaved" style="position:absolute;left:632.5px;top:4.50px;height:20px;line-height:20px;font-size:9.638px;font-weight:400;color:#b8c2ca;white-space:nowrap;font-style:italic;text-decoration:underline;">Last saved&nbsp; 15 days ago</div>
<div id="t_save" style="position:absolute;left:764.6px;top:4.50px;height:20px;line-height:20px;font-size:10.442px;font-weight:700;color:#4a4a4a;white-space:nowrap;">Save</div>
<div id="t_republish" style="position:absolute;left:818.2px;top:4.50px;height:20px;line-height:20px;font-size:10.551px;font-weight:700;color:#4a4a4a;white-space:nowrap;">Republish</div>
<div id="t_preview" style="position:absolute;left:902px;top:4.50px;height:20px;line-height:20px;font-size:8.463px;font-weight:700;color:#d5d5d5;white-space:nowrap;">Preview</div>
<div id="t_support" style="position:absolute;left:965px;top:4.50px;height:20px;line-height:20px;font-size:8.607px;font-weight:700;color:#d5d5d5;white-space:nowrap;">Support</div>
<div id="t_undo" style="position:absolute;left:20.9px;top:31.50px;height:20px;line-height:20px;font-size:8.647px;font-weight:700;color:#585858;white-space:nowrap;">Undo</div>
<div id="t_redo" style="position:absolute;left:70.5px;top:31.50px;height:20px;line-height:20px;font-size:8.6px;font-weight:700;color:#585858;white-space:nowrap;">Redo</div>
<div id="t_moveup" style="position:absolute;left:119.8px;top:31.50px;height:20px;line-height:20px;font-size:8.446px;font-weight:700;color:#585858;white-space:nowrap;">Move Up</div>
<div id="t_movedown" style="position:absolute;left:183px;top:31.50px;height:20px;line-height:20px;font-size:8.603px;font-weight:700;color:#585858;white-space:nowrap;">Move Down</div>
<div id="t_sendback" style="position:absolute;left:258.7px;top:31.50px;height:20px;line-height:20px;font-size:8.58px;font-weight:700;color:#585858;white-space:nowrap;">Send Backward</div>
<div id="t_bringfwd" style="position:absolute;left:350.5px;top:31.50px;height:20px;line-height:20px;font-size:8.663px;font-weight:700;color:#585858;white-space:nowrap;">Bring Forward</div>
<div id="t_copy" style="position:absolute;left:437px;top:31.50px;height:20px;line-height:20px;font-size:8.68px;font-weight:700;color:#585858;white-space:nowrap;">Copy</div>
<div id="t_paste" style="position:absolute;left:486px;top:31.50px;height:20px;line-height:20px;font-size:8.541px;font-weight:700;color:#d8d8d8;white-space:nowrap;">Paste</div>
<div id="t_duplicate" style="position:absolute;left:536.3px;top:31.50px;height:20px;line-height:20px;font-size:8.597px;font-weight:700;color:#585858;white-space:nowrap;">Duplicate</div>
<div id="t_delete" style="position:absolute;left:599.8px;top:31.50px;height:20px;line-height:20px;font-size:8.895px;font-weight:700;color:#585858;white-space:nowrap;">Delete</div>
<div id="t_pagetab" style="position:absolute;left:25.4px;top:56.80px;height:20px;line-height:20px;font-size:9.161px;font-weight:700;color:#d5d5d5;white-space:nowrap;">Page</div>
<div id="t_formconf" style="position:absolute;left:71px;top:56.80px;height:20px;line-height:20px;font-size:10px;font-weight:400;color:#c8c8c8;white-space:nowrap;letter-spacing:0.133px;">Form Confirmation Dialog</div>
<div id="t_guide" style="position:absolute;left:679px;top:56.80px;height:20px;line-height:20px;font-size:8.643px;font-weight:700;color:#c8c8c8;white-space:nowrap;">Guide Settings</div>
<div id="t_props" style="position:absolute;left:799.6px;top:56.80px;height:20px;line-height:20px;font-size:10px;font-weight:400;color:#404040;white-space:nowrap;letter-spacing:0.091px;">Properties</div>
<div id="t_pageprops" style="position:absolute;left:878.8px;top:56.80px;height:20px;line-height:20px;font-size:9.349px;font-weight:700;color:#dadada;white-space:nowrap;">Page Properties</div>
<div id="t_goals" style="position:absolute;left:983px;top:56.80px;height:20px;line-height:20px;font-size:8.994px;font-weight:700;color:#c8c8c8;white-space:nowrap;">Goals</div>
<div id="p_page" style="position:absolute;left:809px;top:80.70px;height:20px;line-height:20px;font-size:8.572px;font-weight:700;color:#e8e8e8;white-space:nowrap;">Page</div>
<div id="p_geom" style="position:absolute;left:801.6px;top:106.00px;height:20px;line-height:20px;font-size:8.618px;font-weight:700;color:#e8e8e8;white-space:nowrap;">GEOMETRY</div>
<div id="p_size" style="position:absolute;left:801.6px;top:133.30px;height:20px;line-height:20px;font-size:8.735px;font-weight:400;color:#9c9c9c;white-space:nowrap;">Size</div>
<div id="p_topm" style="position:absolute;left:801.6px;top:158.30px;height:20px;line-height:20px;font-size:9px;font-weight:400;color:#9c9c9c;white-space:nowrap;letter-spacing:0.185px;">Top Margin</div>
<div id="p_w" style="position:absolute;left:873.8px;top:135.50px;height:20px;line-height:20px;font-size:9px;font-weight:400;color:#9c9c9c;white-space:nowrap;letter-spacing:0.700px;">W</div>
<div id="p_795" style="position:absolute;left:893.4px;top:135.50px;height:20px;line-height:20px;font-size:9px;font-weight:700;color:#ffffff;white-space:nowrap;letter-spacing:0.484px;">795</div>
<div id="p_0" style="position:absolute;left:875.2px;top:160.00px;height:20px;line-height:20px;font-size:9px;font-weight:700;color:#ffffff;white-space:nowrap;">0</div>
<div id="p_title" style="position:absolute;left:801.6px;top:198.00px;height:20px;line-height:20px;font-size:8.705px;font-weight:700;color:#e8e8e8;white-space:nowrap;">TITLE &amp; META DATA</div>
<div id="p_titlel" style="position:absolute;left:801.9px;top:224.80px;height:20px;line-height:20px;font-size:9px;font-weight:400;color:#9c9c9c;white-space:nowrap;letter-spacing:0.332px;">Title</div>
<div id="p_ta1a" style="position:absolute;left:874.8px;top:230.30px;height:20px;line-height:20px;font-size:8.5px;font-weight:700;color:#f0f0f0;white-space:nowrap;letter-spacing:0.151px;">Grow Your Revenue Without</div>
<div id="p_ta1b" style="position:absolute;left:874.8px;top:241.70px;height:20px;line-height:20px;font-size:8.5px;font-weight:700;color:#f0f0f0;white-space:nowrap;letter-spacing:0.093px;">Asking For Money |</div>
<div id="p_ta1c" style="position:absolute;left:874.8px;top:253.10px;height:20px;line-height:20px;font-size:8.406px;font-weight:700;color:#f0f0f0;white-space:nowrap;">NextAfter.com</div>
<div id="p_kw" style="position:absolute;left:801.9px;top:291.70px;height:20px;line-height:20px;font-size:9px;font-weight:400;color:#9c9c9c;white-space:nowrap;letter-spacing:0.141px;">Keywords</div>
<div id="p_ta2a" style="position:absolute;left:874.8px;top:297.70px;height:20px;line-height:20px;font-size:8.5px;font-weight:700;color:#f0f0f0;white-space:nowrap;letter-spacing:0.063px;">fundraising, optimization,</div>
<div id="p_ta2b" style="position:absolute;left:874.8px;top:308.60px;height:20px;line-height:20px;font-size:8.5px;font-weight:700;color:#f0f0f0;white-space:nowrap;letter-spacing:0.147px;">nonprofit, nextafter, content</div>
<div id="p_ta2c" style="position:absolute;left:874.8px;top:320.00px;height:20px;line-height:20px;font-size:8.5px;font-weight:700;color:#f0f0f0;white-space:nowrap;letter-spacing:0.030px;">marketing, advertising, kevin</div>
<div id="p_desc" style="position:absolute;left:801.9px;top:359.00px;height:20px;line-height:20px;font-size:9px;font-weight:400;color:#9c9c9c;white-space:nowrap;letter-spacing:0.217px;">Description</div>
<div id="p_ta3a" style="position:absolute;left:874.8px;top:364.50px;height:20px;line-height:20px;font-size:8.5px;font-weight:700;color:#f0f0f0;white-space:nowrap;letter-spacing:0.095px;">In an upcoming live broadcast</div>
<div id="p_ta3b" style="position:absolute;left:874.8px;top:376.20px;height:20px;line-height:20px;font-size:8.459px;font-weight:700;color:#f0f0f0;white-space:nowrap;">at 1pm CT on Thursday, July</div>
<div id="p_ta3c" style="position:absolute;left:874.8px;top:387.50px;height:20px;line-height:20px;font-size:8.5px;font-weight:700;color:#f0f0f0;white-space:nowrap;letter-spacing:0.131px;">27, Kevin Peters will explore</div>
<div id="p_dt0" style="position:absolute;left:874.8px;top:268.60px;height:20px;line-height:20px;font-size:9px;font-weight:400;color:#5c5c5c;white-space:nowrap;letter-spacing:0.176px;">Dynamic Text</div>
<div id="p_dt1" style="position:absolute;left:874.8px;top:336.40px;height:20px;line-height:20px;font-size:9px;font-weight:400;color:#5c5c5c;white-space:nowrap;letter-spacing:0.176px;">Dynamic Text</div>
<div id="p_dt2" style="position:absolute;left:874.8px;top:403.00px;height:20px;line-height:20px;font-size:9px;font-weight:400;color:#5c5c5c;white-space:nowrap;letter-spacing:0.176px;">Dynamic Text</div>
<div id="p_hide" style="position:absolute;left:817.6px;top:433.40px;height:20px;line-height:20px;font-size:8.5px;font-weight:700;color:#ffffff;white-space:nowrap;letter-spacing:0.084px;">Hide my page from search engines</div>
<div id="p_note" style="position:absolute;left:817.6px;top:444.00px;height:20px;line-height:20px;font-size:7.5px;font-weight:400;color:#a0a0a0;white-space:nowrap;letter-spacing:0.191px;font-style:italic;">Note: make sure this is set the same for all variants</div>
<div id="p_bgp" style="position:absolute;left:801.6px;top:480.00px;height:20px;line-height:20px;font-size:8.465px;font-weight:700;color:#e8e8e8;white-space:nowrap;">BACKGROUND PROPERTIES</div>
<div id="p_style" style="position:absolute;left:801.9px;top:509.30px;height:20px;line-height:20px;font-size:9px;font-weight:400;color:#9c9c9c;white-space:nowrap;letter-spacing:0.121px;">Style</div>
<div id="p_image" style="position:absolute;left:874.8px;top:510.50px;height:20px;line-height:20px;font-size:8.822px;font-weight:700;color:#ffffff;white-space:nowrap;">Image</div>
<div id="p_imgsrc" style="position:absolute;left:801.9px;top:536.20px;height:20px;line-height:20px;font-size:9px;font-weight:400;color:#9c9c9c;white-space:nowrap;letter-spacing:0.015px;">Image Source</div>
<div id="p_webbg" style="position:absolute;left:874.8px;top:537.50px;height:20px;line-height:20px;font-size:9px;font-weight:400;color:#5c5c5c;white-space:nowrap;letter-spacing:0.234px;">webinar-background.png</div>
<div id="b_contents" style="position:absolute;left:106.3px;top:545.50px;height:20px;line-height:20px;font-size:9.5px;font-weight:400;color:#a8a8a8;white-space:nowrap;letter-spacing:0.338px;">Contents</div>
<div id="b_js" style="position:absolute;left:193.1px;top:545.50px;height:20px;line-height:20px;font-size:9.5px;font-weight:400;color:#a8a8a8;white-space:nowrap;letter-spacing:0.228px;">Javascripts</div>
<div id="b_js3" style="position:absolute;left:246.8px;top:545.50px;height:20px;line-height:20px;font-size:9.5px;font-weight:700;color:#ffffff;white-space:nowrap;letter-spacing:0.787px;">(3)</div>
<div id="b_css" style="position:absolute;left:306.4px;top:545.50px;height:20px;line-height:20px;font-size:9.5px;font-weight:400;color:#a8a8a8;white-space:nowrap;letter-spacing:0.227px;">Stylesheets</div>
<div id="b_desk" style="position:absolute;left:603.4px;top:545.50px;height:20px;line-height:20px;font-size:9.5px;font-weight:400;color:#cfcfcf;white-space:nowrap;letter-spacing:0.357px;">Desktop</div>
<div id="b_mob" style="position:absolute;left:672px;top:545.50px;height:20px;line-height:20px;font-size:9.5px;font-weight:400;color:#a8a8a8;white-space:nowrap;letter-spacing:0.360px;">Mobile</div>
<div id="b_on" style="position:absolute;left:715px;top:545.00px;height:20px;line-height:20px;font-size:9.001px;font-weight:700;color:#ffffff;white-space:nowrap;">on</div>
<div style="position:absolute;left:869px;top:263px;width:137px;height:6px;background:#3a3a3a;border-radius:0px;"></div>
<svg style="position:absolute;left:999px;top:257px;" width="6" height="6" viewBox="0 0 6 6"><path d="M1 5.5 L5.5 1 M3.2 5.5 L5.5 3.2" stroke="#9a9a9a" stroke-width="0.7"/></svg>
<div style="position:absolute;left:869px;top:330px;width:137px;height:6px;background:#3a3a3a;border-radius:0px;"></div>
<svg style="position:absolute;left:999px;top:324px;" width="6" height="6" viewBox="0 0 6 6"><path d="M1 5.5 L5.5 1 M3.2 5.5 L5.5 3.2" stroke="#9a9a9a" stroke-width="0.7"/></svg>
<div style="position:absolute;left:869px;top:397px;width:137px;height:6px;background:#3a3a3a;border-radius:0px;"></div>
<svg style="position:absolute;left:999px;top:391px;" width="6" height="6" viewBox="0 0 6 6"><path d="M1 5.5 L5.5 1 M3.2 5.5 L5.5 3.2" stroke="#9a9a9a" stroke-width="0.7"/></svg>
</body></html>
